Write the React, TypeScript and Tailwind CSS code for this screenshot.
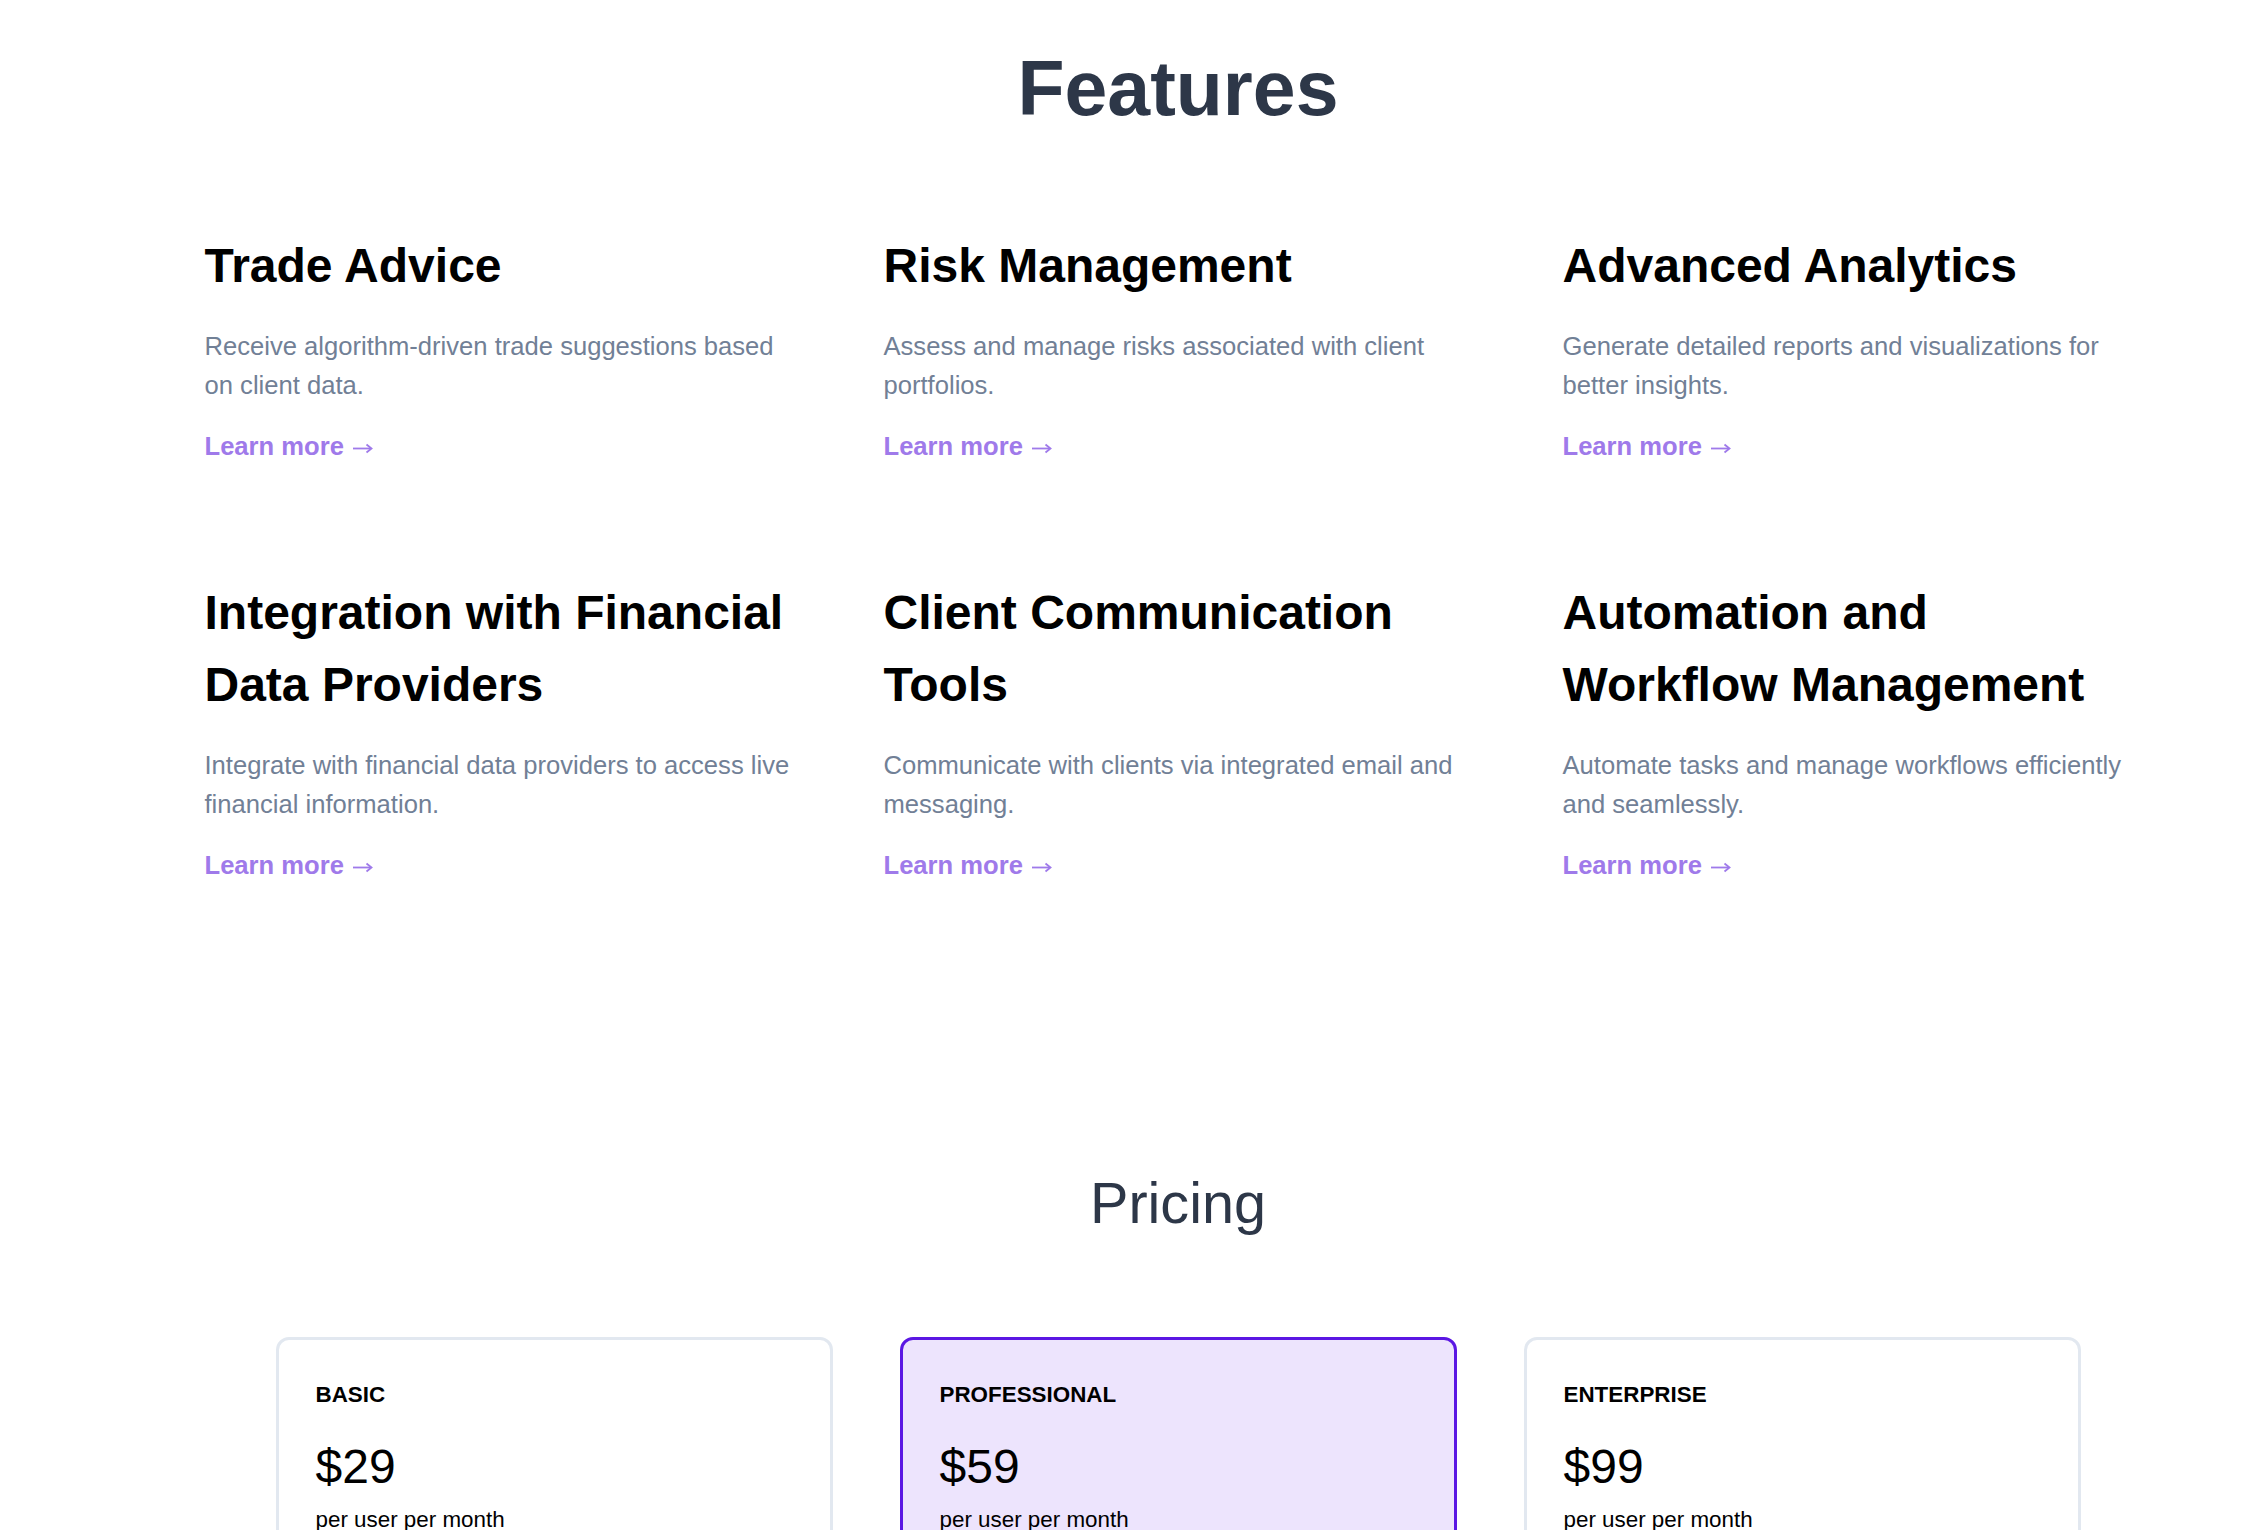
const features = [
  {
    title: 'Trade Advice',
    text: 'Receive algorithm-driven trade suggestions based on client data.',
  },
  {
    title: 'Risk Management',
    text: 'Assess and manage risks associated with client portfolios.',
  },
  {
    title: 'Advanced Analytics',
    text: 'Generate detailed reports and visualizations for better insights.',
  },
  {
    title: 'Integration with Financial Data Providers',
    text: 'Integrate with financial data providers to access live financial information.',
  },
  {
    title: 'Client Communication Tools',
    text: 'Communicate with clients via integrated email and messaging.',
  },
  {
    title: 'Automation and Workflow Management',
    text: 'Automate tasks and manage workflows efficiently and seamlessly.',
  },
];

const plans = [
  { name: 'BASIC', price: '$29', featured: false },
  { name: 'PROFESSIONAL', price: '$59', featured: true },
  { name: 'ENTERPRISE', price: '$99', featured: false },
];

const Arrow = () => (
  <svg
    className="ml-[9px] inline-block align-middle"
    width="20"
    height="14"
    viewBox="0 0 20 14"
    fill="none"
    stroke="currentColor"
    strokeWidth="1.8"
  >
    <path d="M0 7.5h18" />
    <path d="M13.5 3.5l5 4-5 4" />
  </svg>
);

const FeatureCard = ({ title, text }: { title: string; text: string }) => (
  <div className="flex flex-col">
    <h3 className="text-[48px] leading-[72px] font-bold text-black">{title}</h3>
    <p className="mt-[25.4px] text-[25.6px] leading-[39px] text-[#718096]">{text}</p>
    <a href="#" className="mt-[21.6px] text-[25.6px] leading-[38.4px] font-bold text-[#9f7aea]">
      Learn more
      <Arrow />
    </a>
  </div>
);

export default function App() {
  return (
    <div
      className="min-h-screen bg-white pl-[92px]"
      style={{ fontFamily: '"Liberation Sans", Arial, Helvetica, sans-serif' }}
    >
      <section className="pt-[50px]">
        <h2 className="text-center text-[77px] leading-[77px] font-bold text-[#2d3748]">Features</h2>
        <div className="mt-[102.6px] pl-[3px]">
          <div className="mx-auto grid w-[1950px] grid-cols-3 gap-x-[87px] gap-y-[112px]">
            {features.map((f) => (
              <FeatureCard key={f.title} title={f.title} text={f.text} />
            ))}
          </div>
        </div>
      </section>

      <section className="mt-[286.5px] pb-[120px]">
        <h2 className="text-center text-[57.6px] leading-[64px] font-normal text-[#2d3748]">Pricing</h2>
        <div className="mx-auto mt-[102.5px] grid w-[1805px] grid-cols-3 gap-x-[67px]">
          {plans.map((p) => (
            <div
              key={p.name}
              className={
                p.featured
                  ? 'rounded-[13px] border-[3px] border-[#5b17e3] bg-[#ede4fd] px-[37px] pt-[38.5px] pb-[37px]'
                  : 'rounded-[13px] border-[3px] border-[#e2e8f0] bg-white px-[37px] pt-[38.5px] pb-[37px]'
              }
            >
              <div className="text-[22.4px] leading-[32px] font-bold text-black">{p.name}</div>
              <div className="mt-[27.5px] text-[48px] leading-[57.6px] text-black">{p.price}</div>
              <div className="mt-[8px] text-[22.4px] leading-[32px] text-black">per user per month</div>
              <div className="h-[300px]" />
            </div>
          ))}
        </div>
      </section>
    </div>
  );
}
